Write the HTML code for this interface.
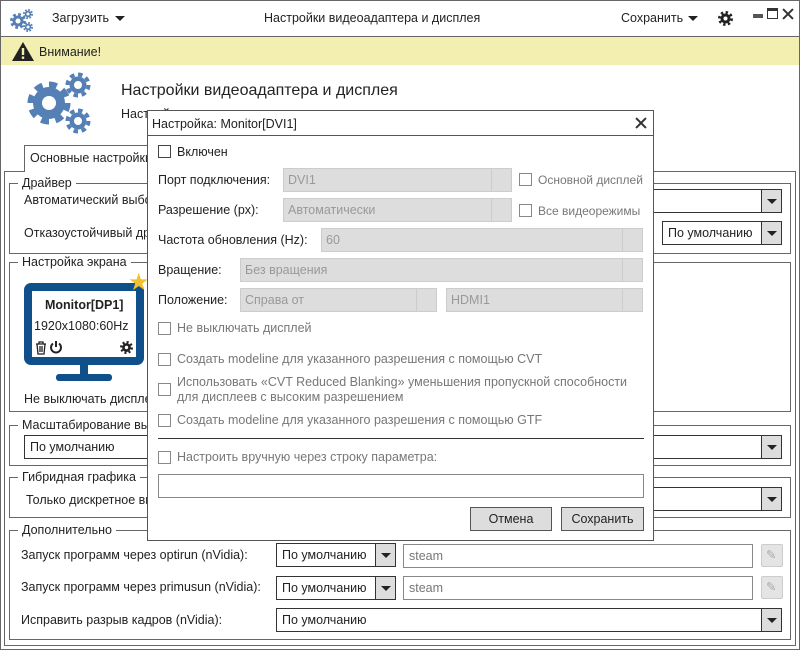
<!DOCTYPE html>
<html><head><meta charset="utf-8"><style>
*{box-sizing:border-box;margin:0;padding:0}
body{width:800px;height:650px;position:relative;background:#fff;font-family:"Liberation Sans",sans-serif;font-size:12.5px;color:#222;overflow:hidden}
.a{position:absolute}
.t{position:absolute;white-space:nowrap;line-height:14px}
.box{position:absolute;border:1px solid #666}
.gb{position:absolute;border:1px solid #666}
.gl{position:absolute;background:#fff;padding:0 4px;white-space:nowrap;line-height:14px;top:-8px;left:8px}
.cmb{position:absolute;border:1px solid #333;background:#fff;height:24px}
.cmb span{position:absolute;left:5px;top:4px;white-space:nowrap}
.arr{position:absolute;right:0;top:0;bottom:0;width:20px;background:#ddd;border-left:1px solid #333}
.arr:after{content:"";position:absolute;left:5px;top:9px;border-left:5px solid transparent;border-right:5px solid transparent;border-top:5px solid #222}
.dis{position:absolute;background:#ddd;border:1px solid #ccc;height:24px;color:#999}
.dis span{position:absolute;left:4px;top:4px;white-space:nowrap}
.dis i{position:absolute;right:0;top:0;bottom:0;width:20px;border-left:1px solid #ccc}
.cb{position:absolute;width:13px;height:13px;border:1px solid #888;background:#fff}
.g{color:#777}
.inp{position:absolute;border:1px solid #888;background:#fff;height:24px}
.btn{position:absolute;background:#ddd;border:1px solid #555;height:24px;text-align:center;line-height:22px}
.x{position:absolute;width:12px;height:12px}
.x:before,.x:after{content:"";position:absolute;left:5px;top:-1px;width:2px;height:14px;background:#333;transform:rotate(45deg)}
.x:after{transform:rotate(-45deg)}
</style></head><body>
<div class="box" style="left:0;top:0;width:800px;height:650px"></div>
<svg class="a" style="left:9px;top:7px" width="26" height="26" viewBox="0 0 26 26">
<g fill="#5580b5"><circle cx="9" cy="14" r="5.5"/><circle cx="9" cy="14" r="6.5" fill="none" stroke="#5580b5" stroke-width="3" stroke-dasharray="2.7 2.4"/>
<circle cx="19" cy="7" r="3.2"/><circle cx="19" cy="7" r="4" fill="none" stroke="#5580b5" stroke-width="2" stroke-dasharray="1.7 1.45"/>
<circle cx="19" cy="20" r="3.2"/><circle cx="19" cy="20" r="4" fill="none" stroke="#5580b5" stroke-width="2" stroke-dasharray="1.7 1.45"/></g>
<circle cx="9" cy="14" r="2.5" fill="#fff"/><circle cx="19" cy="7" r="1.5" fill="#fff"/><circle cx="19" cy="20" r="1.5" fill="#fff"/></svg>
<div class="t" style="left:52px;top:11px">Загрузить</div>
<div class="a" style="left:115px;top:16px;border-left:5px solid transparent;border-right:5px solid transparent;border-top:5px solid #222"></div>
<div class="t" style="left:264px;top:11px">Настройки видеоадаптера и дисплея</div>
<div class="t" style="left:621px;top:11px">Сохранить</div>
<div class="a" style="left:688px;top:16px;border-left:5px solid transparent;border-right:5px solid transparent;border-top:5px solid #222"></div>
<svg class="a" style="left:718px;top:11px" width="15" height="15" viewBox="0 0 15 15"><circle cx="7.5" cy="7.5" r="5" fill="#222"/><circle cx="7.5" cy="7.5" r="6" fill="none" stroke="#222" stroke-width="3" stroke-dasharray="2.3 2.4"/><circle cx="7.5" cy="7.5" r="2" fill="#fff"/></svg>
<div class="a" style="left:753px;top:14px;width:10px;height:4px;background:#555"></div>
<div class="a" style="left:767px;top:8px;width:11px;height:11px;border:1px solid #333;border-top:3px solid #333"></div>
<div class="x" style="left:782px;top:8px"></div>
<div class="a" style="left:0;top:36px;width:800px;height:1px;background:#666"></div>
<div class="a" style="left:1px;top:37px;width:798px;height:28px;background:#f2efb0"></div>
<svg class="a" style="left:11px;top:41px" width="24" height="21" viewBox="0 0 24 21"><path d="M12 1L23 20H1Z" fill="#222"/><rect x="10.8" y="7" width="2.4" height="7" fill="#f2efb0"/><rect x="10.8" y="15.5" width="2.4" height="2.4" fill="#f2efb0"/></svg>
<div class="t" style="left:39px;top:45px">Внимание!</div>
<svg class="a" style="left:25px;top:70px" width="72" height="72" viewBox="0 0 72 72">
<g fill="#5580b5"><circle cx="24" cy="33" r="16"/><circle cx="24" cy="33" r="18.5" fill="none" stroke="#5580b5" stroke-width="6" stroke-dasharray="8 6.5"/>
<circle cx="53" cy="15" r="8.5"/><circle cx="53" cy="15" r="10.5" fill="none" stroke="#5580b5" stroke-width="4" stroke-dasharray="4.5 3.7"/>
<circle cx="53" cy="51" r="8.5"/><circle cx="53" cy="51" r="10.5" fill="none" stroke="#5580b5" stroke-width="4" stroke-dasharray="4.5 3.7"/></g>
<circle cx="24" cy="33" r="7" fill="#fff"/><circle cx="53" cy="15" r="4" fill="#fff"/><circle cx="53" cy="51" r="4" fill="#fff"/></svg>
<div class="t" style="left:121px;top:84px;font-size:16px">Настройки видеоадаптера и дисплея</div>
<div class="t" style="left:121px;top:107px">Настройка</div>
<div class="a" style="left:24px;top:145px;width:130px;height:27px;border:1px solid #666;border-bottom:none;background:#fff"></div>
<div class="t" style="left:30px;top:151px">Основные настройки</div>
<div class="box" style="left:4px;top:171px;width:792px;height:475px"></div>
<div class="a" style="left:25px;top:171px;width:128px;height:1px;background:#fff"></div>
<div class="gb" style="left:9px;top:183px;width:782px;height:71px"><div class="gl">Драйвер</div></div>
<div class="t" style="left:24px;top:193px">Автоматический выбор</div>
<div class="t" style="left:24px;top:226px">Отказоустойчивый драйвер</div>
<div class="cmb" style="left:640px;top:189px;width:142px"><div class="arr"></div></div>
<div class="cmb" style="left:662px;top:221px;width:120px"><span>По умолчанию</span><div class="arr"></div></div>
<div class="gb" style="left:9px;top:262px;width:782px;height:150px"><div class="gl">Настройка экрана</div></div>
<div class="a" style="left:24px;top:283px;width:120px;height:82px;border:8px solid #0f4f8a;border-radius:7px;background:#fff"></div>
<div class="a" style="left:80px;top:364px;width:8px;height:11px;background:#0f4f8a"></div>
<div class="a" style="left:56px;top:374px;width:56px;height:7px;background:#0f4f8a;border-radius:3px"></div>
<div class="t" style="left:45px;top:298px;font-weight:bold">Monitor[DP1]</div>
<div class="t" style="left:34px;top:319px">1920x1080:60Hz</div>
<svg class="a" style="left:35px;top:341px" width="12" height="14" viewBox="0 0 12 14"><path d="M1 3H11M4 3V1H8V3M2 3L3 13H9L10 3M5 5V11M7 5V11" fill="none" stroke="#222" stroke-width="1.3"/></svg>
<svg class="a" style="left:49px;top:340px" width="14" height="14" viewBox="0 0 14 14"><path d="M4 3.5A5 5 0 1 0 10 3.5M7 1V7" fill="none" stroke="#222" stroke-width="2"/></svg>
<svg class="a" style="left:120px;top:341px" width="13" height="13" viewBox="0 0 15 15"><circle cx="7.5" cy="7.5" r="5" fill="#222"/><circle cx="7.5" cy="7.5" r="6" fill="none" stroke="#222" stroke-width="3" stroke-dasharray="2.3 2.4"/><circle cx="7.5" cy="7.5" r="2" fill="#fff"/></svg>
<div class="t" style="left:128px;top:271px;font-size:24px;color:#f2c12e;line-height:24px">★</div>
<div class="t" style="left:24px;top:392px">Не выключать дисплей</div>
<div class="gb" style="left:9px;top:425px;width:782px;height:41px"><div class="gl">Масштабирование выхода</div></div>
<div class="cmb" style="left:24px;top:435px;width:758px"><span>По умолчанию</span><div class="arr"></div></div>
<div class="gb" style="left:9px;top:477px;width:782px;height:41px"><div class="gl">Гибридная графика</div></div>
<div class="t" style="left:26px;top:493px">Только дискретное видео</div>
<div class="cmb" style="left:640px;top:487px;width:142px"><div class="arr"></div></div>
<div class="gb" style="left:9px;top:530px;width:782px;height:110px"><div class="gl">Дополнительно</div></div>
<div class="t" style="left:21px;top:548px">Запуск программ через optirun (nVidia):</div>
<div class="t" style="left:21px;top:580px">Запуск программ через primusun (nVidia):</div>
<div class="t" style="left:21px;top:613px">Исправить разрыв кадров (nVidia):</div>
<div class="cmb" style="left:276px;top:543px;width:120px"><span>По умолчанию</span><div class="arr"></div></div>
<div class="cmb" style="left:276px;top:576px;width:120px"><span>По умолчанию</span><div class="arr"></div></div>
<div class="cmb" style="left:276px;top:608px;width:506px"><span>По умолчанию</span><div class="arr"></div></div>
<div class="inp" style="left:403px;top:544px;width:350px"><span class="t g" style="left:5px;top:4px">steam</span></div>
<div class="inp" style="left:403px;top:576px;width:350px"><span class="t g" style="left:5px;top:4px">steam</span></div>
<div class="a" style="left:761px;top:544px;width:22px;height:23px;background:#e4e4e4;border:1px solid #ccc;border-radius:2px"><span class="t" style="left:4px;top:3px;color:#aaa">✎</span></div>
<div class="a" style="left:761px;top:576px;width:22px;height:23px;background:#e4e4e4;border:1px solid #ccc;border-radius:2px"><span class="t" style="left:4px;top:3px;color:#aaa">✎</span></div>
<div class="a" style="left:147px;top:110px;width:507px;height:431px;background:#fff;border:1px solid #555"></div>
<div class="a" style="left:147px;top:135px;width:507px;height:1px;background:#555"></div>
<div class="t" style="left:152px;top:117px">Настройка: Monitor[DVI1]</div>
<div class="x" style="left:635px;top:117px"></div>
<div class="cb" style="left:158px;top:145px;border-color:#444"></div><div class="t" style="left:177px;top:145px">Включен</div>
<div class="t" style="left:158px;top:173px">Порт подключения:</div>
<div class="dis" style="left:283px;top:168px;width:229px"><span>DVI1</span><i></i></div>
<div class="cb" style="left:519px;top:173px"></div><div class="t g" style="left:538px;top:173px;font-size:12px">Основной дисплей</div>
<div class="t" style="left:158px;top:203px">Разрешение (px):</div>
<div class="dis" style="left:283px;top:198px;width:229px"><span>Автоматически</span><i></i></div>
<div class="cb" style="left:519px;top:204px"></div><div class="t g" style="left:538px;top:204px;font-size:12px">Все видеорежимы</div>
<div class="t" style="left:158px;top:233px">Частота обновления (Hz):</div>
<div class="dis" style="left:321px;top:228px;width:322px"><span>60</span><i></i></div>
<div class="t" style="left:158px;top:263px">Вращение:</div>
<div class="dis" style="left:240px;top:258px;width:403px"><span>Без вращения</span><i></i></div>
<div class="t" style="left:158px;top:293px">Положение:</div>
<div class="dis" style="left:240px;top:288px;width:197px"><span>Справа от</span><i></i></div>
<div class="dis" style="left:446px;top:288px;width:197px"><span>HDMI1</span><i></i></div>
<div class="cb" style="left:158px;top:322px"></div><div class="t g" style="left:177px;top:321px">Не выключать дисплей</div>
<div class="cb" style="left:158px;top:353px"></div><div class="t g" style="left:177px;top:352px">Создать modeline для указанного разрешения с помощью CVT</div>
<div class="cb" style="left:158px;top:383px"></div><div class="t g" style="left:177px;top:375px">Использовать «CVT Reduced Blanking» уменьшения пропускной способности</div>
<div class="t g" style="left:177px;top:390px">для дисплеев с высоким разрешением</div>
<div class="cb" style="left:158px;top:414px"></div><div class="t g" style="left:177px;top:413px">Создать modeline для указанного разрешения с помощью GTF</div>
<div class="a" style="left:158px;top:438px;width:486px;height:1px;background:#333"></div>
<div class="cb" style="left:158px;top:451px"></div><div class="t g" style="left:177px;top:450px">Настроить вручную через строку параметра:</div>
<div class="inp" style="left:158px;top:474px;width:486px;height:24px"></div>
<div class="btn" style="left:470px;top:507px;width:82px">Отмена</div>
<div class="btn" style="left:561px;top:507px;width:83px">Сохранить</div>
</body></html>
